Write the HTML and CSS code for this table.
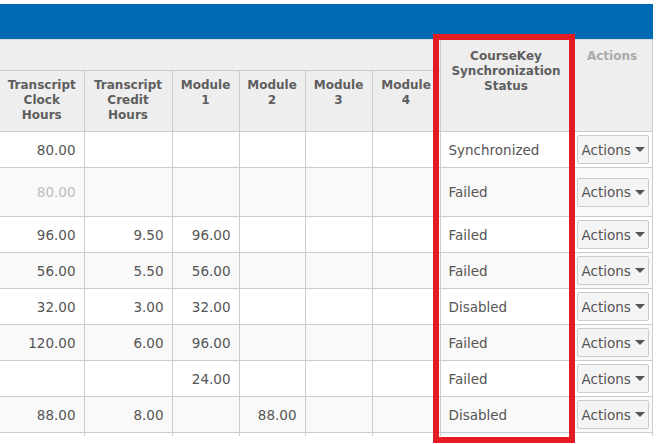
FILE: index.html
```html
<!DOCTYPE html>
<html>
<head>
<meta charset="utf-8">
<link rel="stylesheet" href="styles.css">
</head>
<body>
<div class="page">
  <div class="topbar"></div>
  <table class="grid">
    <colgroup>
      <col class="c1"><col class="c2"><col class="c3"><col class="c4"><col class="c5"><col class="c6"><col class="c7"><col class="c8">
    </colgroup>
    <thead>
      <tr class="hr1">
        <th colspan="6" class="group"></th>
        <th rowspan="2" class="sync-h">CourseKey Synchronization Status</th>
        <th rowspan="2" class="act-h">Actions</th>
      </tr>
      <tr class="hr2">
        <th class="first">Transcript Clock Hours</th>
        <th>Transcript Credit Hours</th>
        <th>Module 1</th>
        <th>Module 2</th>
        <th>Module 3</th>
        <th>Module 4</th>
      </tr>
    </thead>
    <tbody>
      <tr>
        <td class="first num">80.00</td><td class="num"></td><td class="num"></td><td class="num"></td><td class="num"></td><td class="num"></td>
        <td class="status">Synchronized</td>
        <td class="act"><span class="btn">Actions<span class="caret"></span></span></td>
      </tr>
      <tr class="alt tall">
        <td class="first num muted">80.00</td><td class="num"></td><td class="num"></td><td class="num"></td><td class="num"></td><td class="num"></td>
        <td class="status">Failed</td>
        <td class="act"><span class="btn">Actions<span class="caret"></span></span></td>
      </tr>
      <tr>
        <td class="first num">96.00</td><td class="num">9.50</td><td class="num">96.00</td><td class="num"></td><td class="num"></td><td class="num"></td>
        <td class="status">Failed</td>
        <td class="act"><span class="btn">Actions<span class="caret"></span></span></td>
      </tr>
      <tr class="alt">
        <td class="first num">56.00</td><td class="num">5.50</td><td class="num">56.00</td><td class="num"></td><td class="num"></td><td class="num"></td>
        <td class="status">Failed</td>
        <td class="act"><span class="btn">Actions<span class="caret"></span></span></td>
      </tr>
      <tr>
        <td class="first num">32.00</td><td class="num">3.00</td><td class="num">32.00</td><td class="num"></td><td class="num"></td><td class="num"></td>
        <td class="status">Disabled</td>
        <td class="act"><span class="btn">Actions<span class="caret"></span></span></td>
      </tr>
      <tr class="alt">
        <td class="first num">120.00</td><td class="num">6.00</td><td class="num">96.00</td><td class="num"></td><td class="num"></td><td class="num"></td>
        <td class="status">Failed</td>
        <td class="act"><span class="btn">Actions<span class="caret"></span></span></td>
      </tr>
      <tr>
        <td class="first num"></td><td class="num"></td><td class="num">24.00</td><td class="num"></td><td class="num"></td><td class="num"></td>
        <td class="status">Failed</td>
        <td class="act"><span class="btn">Actions<span class="caret"></span></span></td>
      </tr>
      <tr class="alt">
        <td class="first num">88.00</td><td class="num">8.00</td><td class="num"></td><td class="num">88.00</td><td class="num"></td><td class="num"></td>
        <td class="status">Disabled</td>
        <td class="act"><span class="btn">Actions<span class="caret"></span></span></td>
      </tr>
      <tr class="cut">
        <td class="first"></td><td></td><td></td><td></td><td></td><td></td><td></td><td></td>
      </tr>
    </tbody>
  </table>
  <div class="highlight"></div>
</div>
</body>
</html>
```

FILE: styles.css
```css
html, body {
  margin: 0;
  padding: 0;
  background: #ffffff;
}

.page {
  position: relative;
  width: 653px;
  height: 444px;
  overflow: hidden;
  font-family: "DejaVu Sans", Verdana, sans-serif;
  color: #555555;
}

.topbar {
  margin-top: 4px;
  height: 35px;
  background: #0069b4;
}

.grid {
  border-collapse: collapse;
  table-layout: fixed;
  width: 652px;
  border-top: 1px solid #dddddd;
}

.c1 { width: 84px; }
.c2 { width: 88px; }
.c3 { width: 67px; }
.c4 { width: 66px; }
.c5 { width: 67px; }
.c6 { width: 68px; }
.c7 { width: 132px; }
.c8 { width: 80px; }

.grid th {
  background: #eeeeee;
  border: 1px solid #cccccc;
  font-size: 12px;
  line-height: 15px;
  font-weight: bold;
  color: #5e5e5e;
  text-align: center;
  vertical-align: top;
  padding: 0 5px;
  overflow: hidden;
  white-space: normal;
}

.grid th.group {
  height: 30px;
  border-top: none;
  border-left: none;
}

.hr2 th {
  height: 53px;
  padding-top: 7px;
}

.grid th.sync-h {
  padding: 9px 6px 0;
  border-top: none;
}

.grid th.act-h {
  padding: 9px 2px 0;
  color: #aaaaaa;
  border-top: none;
}

.grid th.first,
.grid td.first {
  border-left: none;
}

.grid td {
  height: 35px;
  padding: 0 8px;
  border: 1px solid #cccccc;
  font-size: 13.5px;
  color: #555555;
  white-space: nowrap;
  overflow: hidden;
  background: #ffffff;
}

.grid tr.alt td {
  background: #f9f9f9;
}

.grid tr.tall td {
  height: 48px;
}

.grid td.num {
  text-align: right;
}

.grid td.muted {
  color: #bbbbbb;
}

.grid td.status {
  text-align: left;
  padding-left: 8px;
}

.grid td.act {
  padding: 0 4px;
  text-align: left;
}

.grid tr.cut td {
  height: 3px;
  border-bottom: none;
  background: #ffffff;
}

.btn {
  display: flex;
  align-items: center;
  box-sizing: border-box;
  width: 72px;
  height: 29px;
  padding-left: 4px;
  border: 1px solid #cccccc;
  border-radius: 2px;
  background: #f4f4f4;
  color: #555555;
  font-size: 13.5px;
}

.caret {
  display: inline-block;
  margin-left: 4px;
  width: 0;
  height: 0;
  border-left: 5px solid transparent;
  border-right: 5px solid transparent;
  border-top: 5px solid #555555;
}

.highlight {
  position: absolute;
  left: 433px;
  top: 34px;
  width: 130px;
  height: 397px;
  border: 6px solid #e31b23;
}
```
